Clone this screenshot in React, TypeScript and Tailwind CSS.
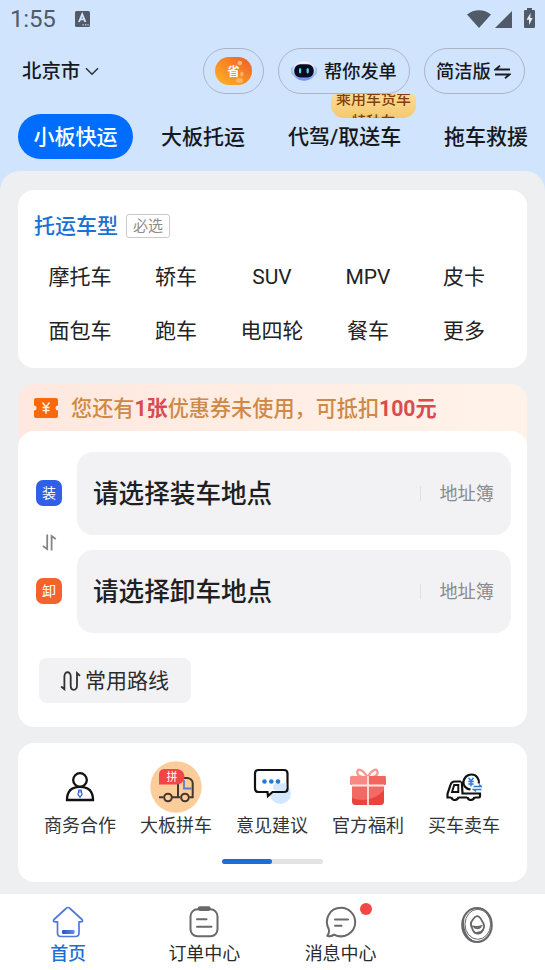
import type { ReactNode } from "react";

const carTypes = ["摩托车", "轿车", "SUV", "MPV", "皮卡", "面包车", "跑车", "电四轮", "餐车", "更多"];

function StatusBar() {
  return (
    <div className="flex h-[38px] items-center pl-[10px] pr-[10px] text-[#515a68]">
      <span className="font-[Roboto] text-[24px] leading-none tracking-[-0.2px]">1:55</span>
      <svg className="ml-[20px]" width="15" height="16" viewBox="0 0 15 16">
        <rect width="15" height="16" rx="1.5" fill="currentColor" />
        <path d="M4 11 L7.2 3.2 L10.4 11 M5.2 8.4 H9.2" stroke="#d0e4fe" strokeWidth="1.9" fill="none" />
        <path d="M7.5 13.8h1.2M10 13.8h1.2M12.4 13.8h1.2" stroke="#d0e4fe" strokeWidth="1.2" />
      </svg>
      <div className="ml-auto flex items-center">
        <svg width="24" height="18" viewBox="0 0 24 18">
          <path d="M0 4.5 C7-1.3 17-1.3 24 4.5 L12 18 Z" fill="currentColor" />
        </svg>
        <svg className="ml-[4px]" width="17" height="17" viewBox="0 0 17 17">
          <path d="M0 17 L17 0 V17 Z" fill="currentColor" />
        </svg>
        <svg className="ml-[12px] -mt-[3px]" width="11" height="20" viewBox="0 0 11 20">
          <path d="M3 0h5v2h2a1 1 0 0 1 1 1v16a1 1 0 0 1-1 1H1a1 1 0 0 1-1-1V3a1 1 0 0 1 1-1h2z" fill="currentColor" />
          <path d="M6.5 5 L2.5 11.8 H5 V17 L8.7 10 H6.3 Z" fill="#e4effd" />
        </svg>
      </div>
    </div>
  );
}

function RobotIcon() {
  return (
    <svg width="26" height="22" viewBox="0 0 26 22">
      <defs>
        <linearGradient id="robot" x1="0" y1="0" x2="0" y2="1">
          <stop offset="0" stopColor="#f3f7ff" />
          <stop offset="0.5" stopColor="#c5d5fc" />
          <stop offset="1" stopColor="#6389ee" />
        </linearGradient>
      </defs>
      <rect x="0" y="6.5" width="6" height="9" rx="3" fill="#a9c0fa" />
      <rect x="20" y="6.5" width="6" height="9" rx="3" fill="#a9c0fa" />
      <ellipse cx="13" cy="11" rx="11.5" ry="9.8" fill="url(#robot)" />
      <rect x="3.3" y="4.2" width="19.4" height="13.3" rx="6" fill="#070b20" />
      <rect x="8" y="8.2" width="2.2" height="5.2" rx="1.1" fill="#5fd6ee" />
      <rect x="15.6" y="8.2" width="2.2" height="5.2" rx="1.1" fill="#5fd6ee" />
    </svg>
  );
}

function Header() {
  return (
    <div className="flex h-[46px] items-center pl-[22px] mt-[10px] text-[#15181d]">
      <span className="w-[58px] whitespace-nowrap pt-[2px] text-[19.4px] font-medium leading-none">北京市</span>
      <svg className="ml-[5px]" width="14" height="9" viewBox="0 0 14 9">
        <path d="M1 1.2 L7 7.2 L13 1.2" fill="none" stroke="#2b3038" strokeWidth="1.5" />
      </svg>
      <div className="ml-[104px] flex h-[46px] w-[61px] items-center justify-center rounded-full border border-[#acb5c5]">
        <svg width="37" height="28" viewBox="0 0 37 28">
          <defs>
            <linearGradient id="save" x1="0" y1="1" x2="1" y2="0">
              <stop offset="0" stopColor="#fdb525" />
              <stop offset="0.5" stopColor="#f98a24" />
              <stop offset="1" stopColor="#ee5b2b" />
            </linearGradient>
          </defs>
          <rect width="37" height="28" rx="14" fill="url(#save)" />
          <circle cx="24.8" cy="6" r="2.3" fill="#fdbc6c" />
          <ellipse cx="26.8" cy="17" rx="1.7" ry="2.6" fill="#fdb363" />
          <ellipse cx="24.5" cy="23.5" rx="3.5" ry="2.6" fill="#fcb45d" />
          <text x="18.5" y="19" textAnchor="middle" fontSize="12.5" fontWeight="700" fill="#fffbe9">省</text>
        </svg>
      </div>
      <div className="ml-[14px] flex h-[46px] w-[132px] items-center rounded-full border border-[#acb5c5] pl-[12px]">
        <RobotIcon />
        <span className="ml-[7px] whitespace-nowrap pt-[2px] text-[18.2px] font-medium leading-none">帮你发单</span>
      </div>
      <div className="ml-[14px] flex h-[46px] w-[101px] items-center rounded-full border border-[#acb5c5] pl-[11px]">
        <span className="whitespace-nowrap pt-[2px] text-[18.2px] font-medium leading-none">简洁版</span>
        <svg className="ml-[3px] mt-[2px]" width="17" height="16" viewBox="0 0 17 16">
          <path d="M16 5.5 H1.5 L6 1.8 M1 10.5 H15.5 L11 14.2" fill="none" stroke="#1a1e24" strokeWidth="1.8" />
        </svg>
      </div>
    </div>
  );
}

function ServiceTabs() {
  return (
    <div className="mt-5 flex h-[45px] items-center pl-[18px] text-[21px] font-medium leading-none text-[#15181d] whitespace-nowrap">
      <div className="flex h-[45px] w-[115px] items-center justify-center rounded-full bg-[#006dfe] pt-[2px] text-white">小板快运</div>
      <div className="ml-7 pt-[2px]">大板托运</div>
      <div className="relative ml-[43px] w-[113px] pt-[2px]">
        代驾/取送车
        <div className="absolute -top-[31px] left-[43px] h-[24px] w-[85px] overflow-hidden rounded-b-[13px] rounded-t-[5px] bg-gradient-to-b from-[#fbdc95] to-[#f5c96e] text-center text-[15px] leading-[22px] text-[#843f0c]">
          <div className="-mt-[6px]">乘用车货车</div>
          <div className="mt-[2px] text-[14.5px]">特种车</div>
        </div>
      </div>
      <div className="ml-[43px] pt-[2px]">拖车救援</div>
    </div>
  );
}

function CarTypeCard() {
  return (
    <div className="h-[178px] rounded-2xl bg-white px-[15px] pt-[21px]">
      <div className="flex h-[29px] items-center">
        <span className="w-[84px] whitespace-nowrap pl-px pt-px text-[21px] font-medium leading-none text-[#1a70d4]">托运车型</span>
        <span className="ml-[9px] flex h-6 w-[44px] items-center justify-center rounded-[3px] border border-[#c9c9c9] pt-px text-[15px] leading-none text-[#8d8d8d]">
          必选
        </span>
      </div>
      <div className="-ml-px mt-[10px] grid grid-cols-5 text-center text-[21px] leading-[54px] text-[#222]">
        {carTypes.map((name) => (
          <div key={name} className="h-[54px] whitespace-nowrap">{name}</div>
        ))}
      </div>
    </div>
  );
}

function PlaceRow({ mark, color, label }: { mark: string; color: string; label: string }) {
  return (
    <div className="flex items-center">
      <div className={`-mt-px flex h-[26px] w-[26px] items-center justify-center rounded-[7px] text-[14px] leading-none text-white ${color}`}>
        {mark}
      </div>
      <div className="ml-[15px] flex h-[83px] w-[434px] items-center rounded-2xl bg-[#f2f2f4] pl-4 pr-[17px]">
        <span className="pt-[3px] text-[25.6px] font-medium leading-none text-[#202022]">{label}</span>
        <span className="ml-auto h-[15px] w-px bg-[#dfdfe1]" />
        <span className="ml-[18px] pt-[2px] text-[18.2px] leading-none text-[#8b8b8d]">地址簿</span>
      </div>
    </div>
  );
}

function RouteCard() {
  return (
    <div className="mt-4 rounded-2xl bg-gradient-to-r from-[#fee8df] to-[#fff3e9]">
      <div className="flex h-[47px] items-center pl-4">
        <svg width="24" height="20" viewBox="0 0 24 20">
          <path
            d="M2 0H22a2 2 0 0 1 2 2V7.5a2.5 2.5 0 0 0 0 5V18a2 2 0 0 1-2 2H2a2 2 0 0 1-2-2V12.5a2.5 2.5 0 0 0 0-5V2a2 2 0 0 1 2-2z"
            fill="#f9690b"
          />
          <path d="M8.5 4.5 L12 9 L15.5 4.5 M12 9 V15.8 M8.5 9.5 H15.5 M8.5 12.5 H15.5" fill="none" stroke="#fff1de" strokeWidth="1.5" />
        </svg>
        <div className="ml-[13px] whitespace-nowrap pt-[3px] text-[21.15px] font-medium leading-none text-[#ce8945]">
          您还有<span className="font-bold text-[#d94b52]">1张</span>优惠券未使用，可抵扣
          <span className="font-bold text-[#d94b52]">100元</span>
        </div>
      </div>
      <div className="h-[296px] rounded-2xl bg-white pl-[18px] pt-[21px]">
        <PlaceRow mark="装" color="bg-[#315fe5]" label="请选择装车地点" />
        <div className="flex h-[15px] items-center pl-[6px]">
          <svg width="15" height="17" viewBox="0 0 15 17">
            <path d="M5.2 0.5 V15 L0.9 12 M9.6 16.5 V2 L13.8 5" fill="none" stroke="#858585" strokeWidth="1.8" />
          </svg>
        </div>
        <PlaceRow mark="卸" color="bg-[#f3632b]" label="请选择卸车地点" />
        <div className="ml-[3px] mt-[25px] flex h-[45px] w-[152px] items-center rounded-lg bg-[#f2f2f4] pl-[21px]">
          <svg width="21" height="20" viewBox="0 0 21 20">
            <path
              d="M1.2 15.5 L4.4 18.2 V5.5 C4.4-0.2 10.7-0.2 10.7 5.5 V14.5 C10.7 20.2 17 20.2 17 14.5 V2 L20 4.8"
              fill="none"
              stroke="#303032"
              strokeWidth="1.8"
            />
          </svg>
          <span className="ml-[4px] pt-px text-[21px] leading-none text-[#2b2b2d]">常用路线</span>
        </div>
      </div>
    </div>
  );
}

function PersonIcon() {
  return (
    <svg width="30" height="30" viewBox="0 0 30 30" fill="none" stroke="#111" strokeWidth="2.3">
      <circle cx="15" cy="8" r="6.8" />
      <path d="M2 28 C2 18 8 14.8 15 14.8 S28 18 28 28 Z" />
      <path d="M13.8 18.2 H16.2 L17 22.5 L15 25.2 L13 22.5 Z M13.5 20 H16.5" stroke="#2e61dc" strokeWidth="1.2" />
    </svg>
  );
}

function CarpoolIcon() {
  return (
    <svg width="52" height="52" viewBox="0 0 52 52">
      <circle cx="26" cy="26" r="25.7" fill="#fbcd9b" />
      <path d="M28 15 V36 M9 36.3 H13.5 M22 36.3 H30.5 M39.5 36.3 H42.7 V22 C42.7 19.5 40 17 37 17 H34" fill="none" stroke="#45362e" strokeWidth="2" />
      <path d="M34 19 V27.5 H41.5" fill="none" stroke="#6079d5" strokeWidth="1.8" />
      <circle cx="18" cy="36.5" r="3.8" fill="#fbcd9b" stroke="#45362e" strokeWidth="2" />
      <circle cx="35" cy="36.5" r="3.8" fill="#fbcd9b" stroke="#45362e" strokeWidth="2" />
      <path d="M9 23.5 V14 C9 10 11 8 15 8 H26.5 C37 8 37 23.5 26.5 23.5 Z" fill="#f34446" />
      <text x="22" y="19.6" textAnchor="middle" fontSize="11" fill="#fff">拼</text>
    </svg>
  );
}

function FeedbackIcon() {
  return (
    <svg className="ml-[2px]" width="40" height="38" viewBox="0 0 40 38">
      <circle cx="27.5" cy="25.5" r="10.5" fill="#d4e7fc" />
      <path
        d="M5.5 2 H31 Q34.5 2 34.5 5.5 V20.5 Q34.5 24 31 24 H19.5 L15 28 L14.5 24 H5.5 Q2 24 2 20.5 V5.5 Q2 2 5.5 2 Z"
        fill="#fff"
        stroke="#111"
        strokeWidth="2.2"
      />
      <path d="M24.5 22.8 C19 22.8 19 18 22 15.2 H33.3 V20.5 Q33.3 22.8 31 22.8 Z" fill="#d4e7fc" />
      <circle cx="11.5" cy="13.5" r="2.3" fill="#237bd5" />
      <circle cx="18.3" cy="13.5" r="2.3" fill="#237bd5" />
      <circle cx="25" cy="13.5" r="2.3" fill="#237bd5" />
    </svg>
  );
}

function GiftIcon() {
  return (
    <svg width="38" height="38" viewBox="0 0 38 38">
      <path d="M18.5 9.5 C13-0.5 7 0.5 8.5 5.5 C9 8 12 9.5 18.5 9.5 C24 9.5 28 8 28.5 5.5 C29.5 0.5 24-0.5 18.5 9.5 Z" fill="none" stroke="#f79a94" strokeWidth="2.4" />
      <path d="M3 15 H35 V33 Q35 37 31 37 H7 Q3 37 3 33 Z" fill="#f36a64" />
      <path d="M3 30 C14 34 26 32 35 22 V33 Q35 37 31 37 H7 Q3 37 3 33 Z" fill="#e9433e" />
      <rect x="1" y="8" width="36" height="9" rx="1.5" fill="#f98983" />
      <path d="M19 8 H35.5 Q37 8 37 9.5 V15 Q37 17 35 17 H19 Z" fill="#f26660" />
      <path d="M3 17.5 H35 M19 8 V37" stroke="#fde5e0" strokeWidth="1.8" />
    </svg>
  );
}

function TradeIcon() {
  return (
    <svg width="36" height="28" viewBox="0 0 36 28" fill="none" stroke="#111" strokeWidth="2.2">
      <path d="M15 8.5 H9 Q5.5 8.5 4.6 11.5 L1.5 21 V24.5 H5 M12.5 24.5 H21 M28.5 24.5 H33 Q34 24.5 34 23.2 V20.5 H16.5 L15.8 8.5" />
      <path d="M8.2 12 H12.3 V19 H6 Z" strokeWidth="1.9" />
      <path d="M5.2 24 Q6 27 8.8 27 Q11.8 27 12.5 24 M21.3 24 Q22 27 24.8 27 Q27.8 27 28.5 24" />
      <path d="M24.5 16.5 C13.5 15 16.5 1.5 25.5 1.5 C30.5 1.5 33.5 6 32.8 10.5" />
      <path d="M22.5 4.8 L25 8 L27.5 4.8 M25 8 V13.5 M22.3 8.5 H27.7 M22.3 11 H27.7" stroke="#287bd8" strokeWidth="1.4" />
      <path d="M27.5 13.5 H35.5 L33 11.5 M35.5 16.5 H27.5 L30 18.5" stroke="#287bd8" strokeWidth="1.4" />
    </svg>
  );
}

const shortcuts: { label: string; icon: ReactNode }[] = [
  { label: "商务合作", icon: <PersonIcon /> },
  { label: "大板拼车", icon: <CarpoolIcon /> },
  { label: "意见建议", icon: <FeedbackIcon /> },
  { label: "官方福利", icon: <GiftIcon /> },
  { label: "买车卖车", icon: <TradeIcon /> },
];

function ShortcutCard() {
  return (
    <div className="mt-[16px] h-[139px] rounded-2xl bg-white px-[15px] pt-[18px]">
      <div className="-ml-px grid grid-cols-5">
        {shortcuts.map((item) => (
          <div key={item.label} className="flex flex-col items-center">
            <div className="flex h-[52px] items-center">{item.icon}</div>
            <span className="mt-[4px] whitespace-nowrap text-[18px] leading-[18px] text-[#343436]">{item.label}</span>
          </div>
        ))}
      </div>
      <div className="mx-auto mt-[24px] h-[5px] w-[101px] rounded-full bg-[#e3e3e5]">
        <div className="h-full w-[50px] rounded-full bg-[#1c6cdc]" />
      </div>
    </div>
  );
}

function BottomNav() {
  return (
    <div className="grid h-[76px] grid-cols-4 bg-white pt-3 text-[18px] leading-[18px] text-[#2a2a2c]">
      <div className="flex flex-col items-center">
        <svg width="32" height="32" viewBox="0 0 32 32">
          <defs>
            <linearGradient id="home" x1="0" y1="0" x2="1" y2="0">
              <stop offset="0" stopColor="#2d50bd" />
              <stop offset="1" stopColor="#5c91ee" />
            </linearGradient>
          </defs>
          <path
            d="M16 1.5 Q17 1.5 18 2.5 L30 13.5 Q31.5 15.5 29 15.8 H27 V27 Q27 30.5 23.5 30.5 H9 Q5.5 30.5 5.5 27 V15.8 H3 Q0.5 15.5 2 13.5 L14 2.5 Q15 1.5 16 1.5 Z"
            fill="none"
            stroke="#4f79db"
            strokeWidth="1.7"
            strokeLinejoin="round"
          />
          <rect x="10" y="24" width="12.5" height="4" rx="1.2" fill="url(#home)" />
        </svg>
        <span className="mt-[7px] font-medium text-[#1a70d4]">首页</span>
      </div>
      <div className="flex flex-col items-center">
        <svg width="32" height="32" viewBox="0 0 32 32" fill="none" stroke="#69696b" strokeWidth="2" strokeLinecap="round">
          <rect x="2.5" y="3.3" width="27" height="27" rx="7" />
          <path d="M12 2.6 H20.5" strokeWidth="4.6" />
          <path d="M9 13.2 H18.5 M9 20.7 H23.5" />
        </svg>
        <span className="mt-[7px]">订单中心</span>
      </div>
      <div className="flex flex-col items-center">
        <div className="relative">
          <svg width="32" height="32" viewBox="0 0 32 32" fill="none" stroke="#69696b" strokeWidth="2" strokeLinecap="round" strokeLinejoin="round">
            <path d="M3.8 23.2 C-1.5 13 5 1.8 16 1.8 C24 1.8 30.2 8.5 30.2 16 C30.2 27 18.5 33.5 9 28.6 C6.5 30.5 4.2 30.6 2.3 29.8 Q4.8 26.5 3.8 23.2 Z" />
            <path d="M10 13.4 H23 M10 19.8 H16.5" />
          </svg>
          <span className="absolute -right-[15px] -top-[3px] h-3 w-3 rounded-full bg-[#f24745]" />
        </div>
        <span className="mt-[7px]">消息中心</span>
      </div>
      <div className="flex flex-col items-center">
        <svg width="34" height="38" viewBox="0 0 34 38" fill="none" stroke="#67676a">
          <ellipse cx="17" cy="19" rx="14.8" ry="17" strokeWidth="2" />
          <ellipse cx="17.8" cy="18.3" rx="12.8" ry="15" strokeWidth="1" />
          <path d="M3.2 13 C1.8 23 6 31.5 11.5 34.5" strokeWidth="2.4" />
          <path d="M17 10.2 C14.3 10.2 13.5 13 11.5 15.5 C9.5 19 11.8 21 13 24.3 C15.3 28.8 21 28.5 22.5 24.5 C25.5 20.5 24 18 22 15 C20.8 12.5 20 10.2 17 10.2 Z" strokeWidth="1.8" />
          <path d="M12.2 20.3 Q17.5 21.6 22.5 19.5 M13.5 20.5 Q17 24.5 21.5 20.5 M23.8 23.5 Q20 27.8 14 26.5" strokeWidth="1.4" />
        </svg>
      </div>
    </div>
  );
}

export default function App() {
  return (
    <div className="flex h-[970px] w-[545px] flex-col overflow-hidden bg-[#d0e4fe] font-[Roboto,'Noto_Sans_CJK_SC',sans-serif]">
      <StatusBar />
      <Header />
      <ServiceTabs />
      <div className="mt-[12px] flex-1 rounded-t-[20px] bg-[#edeff1] px-[18px] pt-[19px]">
        <CarTypeCard />
        <RouteCard />
        <ShortcutCard />
      </div>
      <BottomNav />
    </div>
  );
}
